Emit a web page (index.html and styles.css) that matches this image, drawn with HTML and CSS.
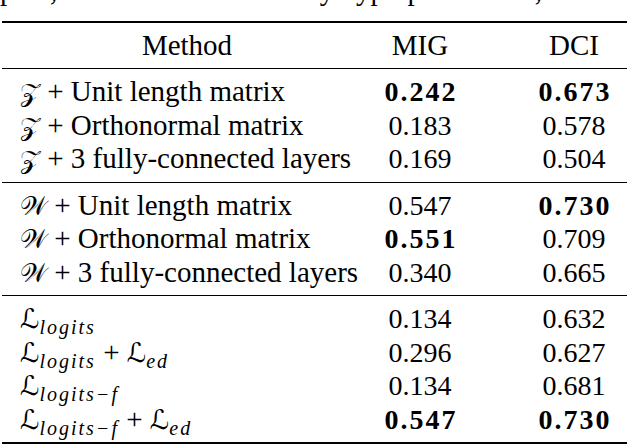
FILE: index.html
```html
<!DOCTYPE html>
<html lang="en">
<head>
    <meta charset="UTF-8">
    <title>Table: MIG and DCI scores</title>
    <link rel="stylesheet" href="styles.css">
</head>
<body>
    <div class="prev">
        <p>pute, and we do not tune any hyperparameters, and the proposed approach requires p</p>
    </div>

    <table class="results">
        <thead>
            <tr>
                <th class="method">Method</th>
                <th>MIG</th>
                <th class="dci">DCI</th>
            </tr>
        </thead>
        <tbody>
            <tr class="first">
                <td class="method"><span class="cal">&#x1D4B5;</span> + Unit length matrix</td>
                <td class="num"><b>0.242</b></td>
                <td class="num dci"><b>0.673</b></td>
            </tr>
            <tr>
                <td class="method"><span class="cal">&#x1D4B5;</span> + Orthonormal matrix</td>
                <td class="num">0.183</td>
                <td class="num dci">0.578</td>
            </tr>
            <tr class="last">
                <td class="method"><span class="cal">&#x1D4B5;</span> + 3 fully-connected layers</td>
                <td class="num">0.169</td>
                <td class="num dci">0.504</td>
            </tr>
        </tbody>
        <tbody>
            <tr class="first">
                <td class="method"><span class="cal">&#x1D4B2;</span> + Unit length matrix</td>
                <td class="num">0.547</td>
                <td class="num dci"><b>0.730</b></td>
            </tr>
            <tr>
                <td class="method"><span class="cal">&#x1D4B2;</span> + Orthonormal matrix</td>
                <td class="num"><b>0.551</b></td>
                <td class="num dci">0.709</td>
            </tr>
            <tr class="last">
                <td class="method"><span class="cal">&#x1D4B2;</span> + 3 fully-connected layers</td>
                <td class="num">0.340</td>
                <td class="num dci">0.665</td>
            </tr>
        </tbody>
        <tbody>
            <tr class="first">
                <td class="method"><span class="cal-l">&#x2112;</span><sub>logits</sub></td>
                <td class="num">0.134</td>
                <td class="num dci">0.632</td>
            </tr>
            <tr>
                <td class="method"><span class="cal-l">&#x2112;</span><sub>logits</sub> + <span class="cal-l">&#x2112;</span><sub>ed</sub></td>
                <td class="num">0.296</td>
                <td class="num dci">0.627</td>
            </tr>
            <tr>
                <td class="method"><span class="cal-l">&#x2112;</span><sub>logits&minus;f</sub></td>
                <td class="num">0.134</td>
                <td class="num dci">0.681</td>
            </tr>
            <tr class="last">
                <td class="method"><span class="cal-l">&#x2112;</span><sub>logits&minus;f</sub> + <span class="cal-l">&#x2112;</span><sub>ed</sub></td>
                <td class="num"><b>0.547</b></td>
                <td class="num dci"><b>0.730</b></td>
            </tr>
        </tbody>
    </table>
</body>
</html>
```

FILE: styles.css
```css
body {
    margin: 0;
    background-color: #fff;
    color: #000;
    font-family: "Liberation Serif", serif;
    font-size: 29px;
}
.prev {
    height: 8px;
    overflow: hidden;
    margin-bottom: 13px;
}
.prev p {
    margin: -25px 0 0 0;
    line-height: 30px;
    white-space: nowrap;
}
.results {
    margin-left: 2px;
    width: 625px;
    border-collapse: collapse;
    border-top: 2px solid #000;
    border-bottom: 2px solid #000;
}
.results th,
.results td {
    padding: 0;
    height: 33.5px;
    line-height: 33.5px;
    text-align: center;
    font-weight: normal;
    width: 96px;
    white-space: nowrap;
}
.results thead th {
    height: 45px;
    border-bottom: 1.5px solid #000;
}
.results tbody + tbody {
    border-top: 1.5px solid #000;
}
.results .method {
    width: 352px;
    padding-left: 18px;
    text-align: left;
}
.results th.method {
    padding-left: 0;
    text-align: center;
}
.results .dci {
    width: 106px;
    padding-left: 53px;
}
.results .num {
    font-size: 28px;
}
.results tr.first td {
    padding-top: 6px;
}
.results tr.last td {
    padding-bottom: 6px;
}
.results b {
    font-weight: bold;
    letter-spacing: 2px;
    margin-right: -2px;
}
.cal {
    font-size: 26px;
    line-height: 0;
}
.cal-l {
    font-family: "DejaVu Sans", serif;
    font-size: 27px;
    line-height: 0;
}
sub {
    font-style: italic;
    font-size: 20px;
    letter-spacing: 2px;
    line-height: 0;
    vertical-align: -6px;
}
```
